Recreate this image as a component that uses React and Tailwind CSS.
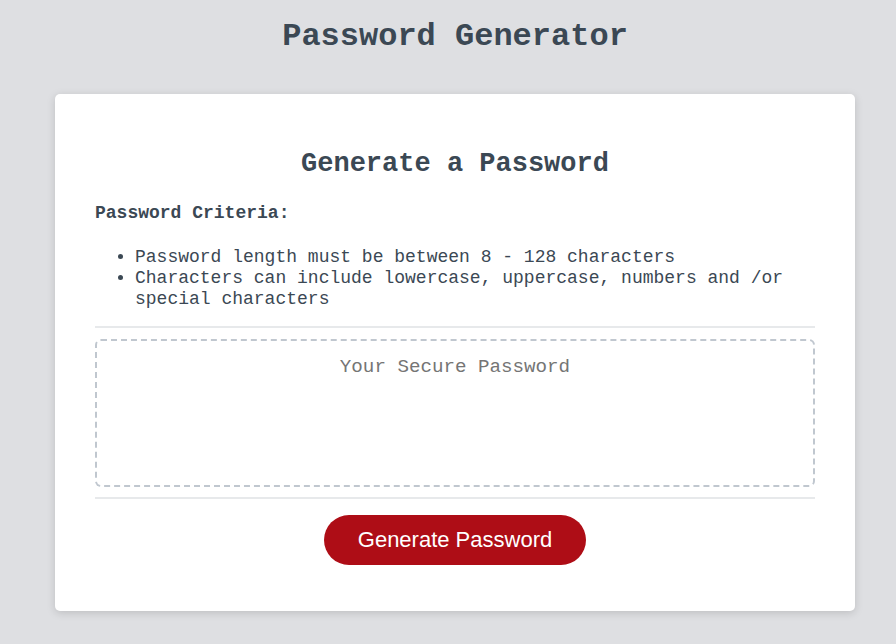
export default function App() {
  return (
    <div className="min-h-screen bg-[#dedfe2] pl-[34px] pr-5 pt-[19px] pb-8 font-['Liberation_Mono','Courier_New',monospace] text-[#3b4854]">
      <header className="text-center">
        <h1 className="text-[32px] leading-[36px] font-bold">Password Generator</h1>
      </header>
      <div className="mx-auto mt-[39px] max-w-[800px] rounded-[5px] bg-white px-10 pt-[30px] pb-[30px] text-[18px] shadow-[0_2px_8px_0_rgba(0,0,0,0.15)]">
        <div>
          <h2 className="mt-[25px] text-center text-[27px] leading-[31px] font-bold">Generate a Password</h2>
          <p className="mt-[23px] text-[18px] leading-[21px] font-bold">Password Criteria:</p>
          <ul className="mt-[23px] list-disc pl-10 leading-[21px]">
            <li>Password length must be between 8 - 128 characters</li>
            <li>Characters can include lowercase, uppercase, numbers and /or special characters</li>
          </ul>
          <div className="mt-[16px] h-[2px] w-full bg-[#e7e9eb]"></div>
        </div>
        <div className="pt-[11px] pb-[10px]">
          <div className="h-[148px] rounded-[6px] border-2 border-dashed border-[#c0c7cf] px-[10px] pt-[15px] text-center text-[19.2px] leading-[22px] text-[#757575]">
            Your Secure Password
          </div>
        </div>
        <div className="text-center">
          <div className="h-[2px] w-full bg-[#e7e9eb]"></div>
          <button className="mt-4 mb-4 inline-block cursor-pointer rounded-[25px] bg-[#ae0d16] px-[34px] py-[14px] font-['Liberation_Sans',Arial,sans-serif] text-[22px] leading-[22px] text-white">
            Generate Password
          </button>
        </div>
      </div>
    </div>
  );
}
